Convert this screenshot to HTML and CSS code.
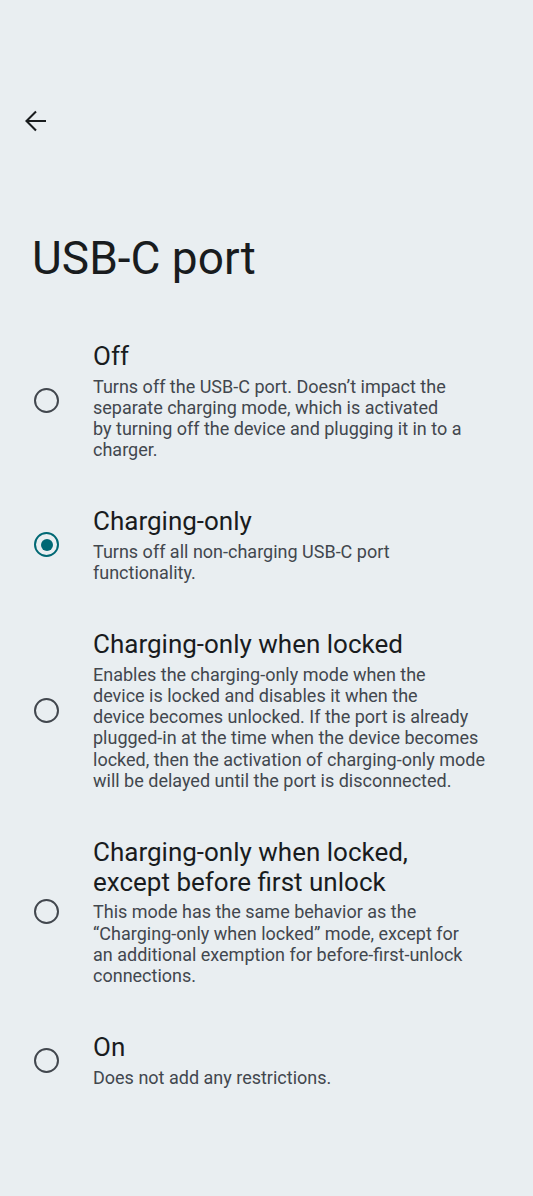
FILE: index.html
```html
<!DOCTYPE html>
<html lang="en">
<head>
    <meta charset="UTF-8">
    <meta name="viewport" content="width=device-width, initial-scale=1.0">
    <title>USB-C port</title>
    <link rel="stylesheet" href="styles.css">
</head>
<body>

    <header class="top-bar">
        <button class="back-btn" aria-label="Navigate up">
            <svg width="30" height="30" viewBox="0 0 30 30" fill="none" stroke="currentColor" stroke-width="2.1">
                <path d="M25 15H6.5M15 5.5L5.5 15L15 24.5"/>
            </svg>
        </button>
    </header>

    <h1 class="page-title">USB-C port</h1>

    <ul class="options">
        <li class="option">
            <span class="radio"></span>
            <div class="option-text">
                <div class="option-title">Off</div>
                <p class="option-summary">Turns off the USB-C port. Doesn’t impact the<br>separate charging mode, which is activated<br>by turning off the device and plugging it in to a<br>charger.</p>
            </div>
        </li>
        <li class="option">
            <span class="radio checked"></span>
            <div class="option-text">
                <div class="option-title">Charging-only</div>
                <p class="option-summary">Turns off all non-charging USB-C port<br>functionality.</p>
            </div>
        </li>
        <li class="option">
            <span class="radio"></span>
            <div class="option-text">
                <div class="option-title">Charging-only when locked</div>
                <p class="option-summary">Enables the charging-only mode when the<br>device is locked and disables it when the<br>device becomes unlocked. If the port is already<br>plugged-in at the time when the device becomes<br>locked, then the activation of charging-only mode<br>will be delayed until the port is disconnected.</p>
            </div>
        </li>
        <li class="option">
            <span class="radio"></span>
            <div class="option-text">
                <div class="option-title">Charging-only when locked,<br>except before first unlock</div>
                <p class="option-summary">This mode has the same behavior as the<br>“Charging-only when locked” mode, except for<br>an additional exemption for before-first-unlock<br>connections.</p>
            </div>
        </li>
        <li class="option">
            <span class="radio"></span>
            <div class="option-text">
                <div class="option-title">On</div>
                <p class="option-summary">Does not add any restrictions.</p>
            </div>
        </li>
    </ul>

</body>
</html>
```

FILE: styles.css
```css
* { margin: 0; padding: 0; box-sizing: border-box; font-family: 'Roboto', 'Noto Sans', sans-serif; }
body { background: #e9eef1; color: #191c1e; min-height: 1196px; }

.top-bar { padding: 106px 0 0 21px; height: 136px; }
.back-btn {
    width: 30px; height: 30px; border: none; background: none;
    color: #191c1e; display: flex; cursor: pointer;
}

.page-title {
    margin-top: 94px; padding-left: 32px;
    font-size: 46px; line-height: 56px; font-weight: 400; color: #191c1e;
}

.options { list-style: none; margin-top: 32px; }
.option {
    display: flex; align-items: center; gap: 34px;
    padding: 23px 8px 23px 34px;
}

.radio {
    flex: none; width: 25px; height: 25px; border-radius: 50%;
    border: 2.5px solid #42474e;
    display: flex; align-items: center; justify-content: center;
}
.radio.checked { border-color: #006874; }
.radio.checked::after {
    content: ''; width: 12px; height: 12px; border-radius: 50%; background: #006874;
}

.option-text { flex: 1; }
.option-title { font-size: 26px; line-height: 30px; color: #191c1e; }
.option-summary {
    margin-top: 4.5px; font-size: 18px; line-height: 21.2px; color: #42474e;
}
```
